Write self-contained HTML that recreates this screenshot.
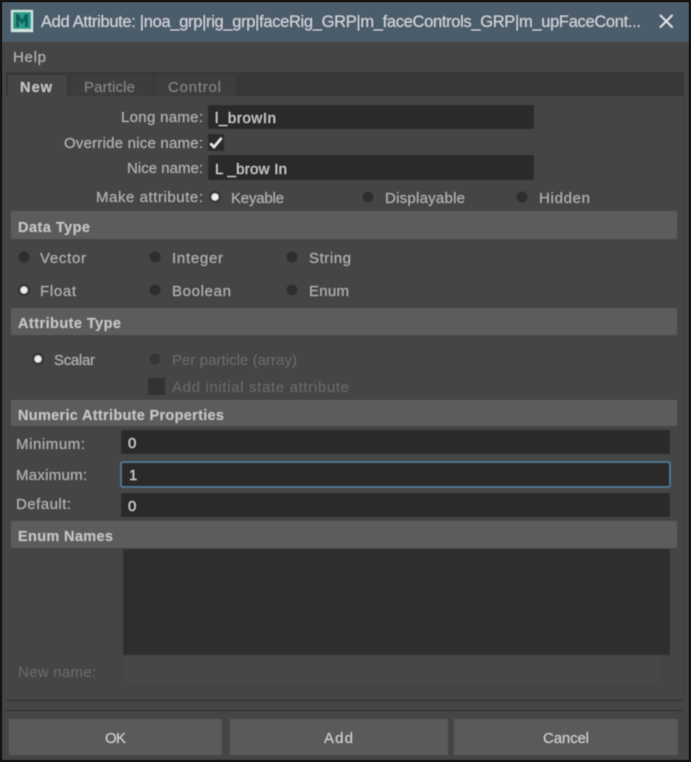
<!DOCTYPE html>
<html><head><meta charset="utf-8"><title>Add Attribute</title>
<style>
html,body{margin:0;padding:0;background:#141414;width:691px;height:762px;overflow:hidden}
svg{display:block}
text{font-family:"Liberation Sans",sans-serif;font-size:15px;fill:#b4b4b4}
.b{font-weight:bold;font-size:14.5px;fill:#c6c6c6}
.d{fill:#6b6b6b}
.v{fill:#d4d4d4}
</style></head><body>
<svg width="691" height="762" viewBox="0 0 691 762" xmlns="http://www.w3.org/2000/svg">
<defs><filter id="f" x="0" y="0" width="100%" height="100%"><feGaussianBlur stdDeviation="0.65"/></filter></defs>
<rect width="691" height="762" fill="#141414"/>
<g filter="url(#f)">
<rect x="2" y="2" width="687" height="758" fill="#444444"/>
<rect x="2" y="2" width="687" height="40" fill="#4c5b6b"/>
<!-- logo -->
<rect x="11" y="10" width="22" height="22" fill="#cfe6e1"/>
<rect x="13" y="12" width="18" height="17" fill="#2a9a8b"/>
<path d="M16 27V14h2.500l3.500 6 3.500-6H28v13h-3v-7l-3 4.500-3-4.500v7z" fill="#11605a"/>
<text x="41" y="27" style="font-size:16.500px;fill:#d2d7dc" textLength="600" lengthAdjust="spacing">Add Attribute: |noa_grp|rig_grp|faceRig_GRP|m_faceControls_GRP|m_upFaceCont...</text>
<path d="M660 15l12.500 12.500M672.500 15L660 27.500" stroke="#e2e6ea" stroke-width="1.800" fill="none"/>
<text x="13" y="62" textLength="33">Help</text>
<!-- tab bar -->
<rect x="6" y="72" width="677" height="24" fill="#373737"/>
<rect x="8" y="75" width="59" height="21" fill="#444444"/>
<rect x="70" y="75" width="82" height="21" fill="#3d3d3d"/>
<rect x="155" y="75" width="81" height="21" fill="#3d3d3d"/>
<text x="20" y="92" class="b" textLength="32">New</text>
<text x="84" y="92" style="fill:#858585" textLength="51">Particle</text>
<text x="168" y="92" style="fill:#858585" textLength="53">Control</text>
<!-- panel -->
<rect x="6" y="96" width="677" height="604" fill="#444444"/>
<path d="M6 700.500H684M6 710.500H684" stroke="#2e2e2e" stroke-width="1"/>
<path d="M683.500 72V700" stroke="#3a3a3a" stroke-width="1"/>
<!-- top form -->
<text x="121" y="122" textLength="82">Long name:</text>
<rect x="208" y="105" width="326" height="24" rx="1" fill="#2b2b2b"/>
<text x="215" y="123" class="v" textLength="61">l_browIn</text>
<text x="64" y="148" textLength="139">Override nice name:</text>
<rect x="208" y="134" width="16" height="17" fill="#2b2b2b"/>
<path d="M210.500 143.500l3.500 3.500 7.500-9" stroke="#f0f0f0" stroke-width="2.200" fill="none"/>
<text x="127" y="173" textLength="76">Nice name:</text>
<rect x="208" y="155" width="326" height="25" rx="1" fill="#2b2b2b"/>
<text x="215" y="174" class="v" textLength="72">L _brow In</text>
<text x="96" y="202" textLength="107">Make attribute:</text>
<circle cx="215" cy="197" r="3.500" fill="#eee"/><circle cx="215" cy="197" r="5.500" fill="none" stroke="#333" stroke-width="1.200"/>
<text x="231" y="203" textLength="53">Keyable</text>
<circle cx="368" cy="197" r="5.500" fill="#2e2e2e"/>
<text x="385" y="203" textLength="80">Displayable</text>
<circle cx="522" cy="197" r="5.500" fill="#2e2e2e"/>
<text x="539" y="203" textLength="51">Hidden</text>
<!-- Data type -->
<rect x="11" y="211" width="666" height="28" rx="1" fill="#5b5b5b"/>
<text x="18" y="232" class="b" textLength="72">Data Type</text>
<circle cx="24" cy="257" r="5.500" fill="#2e2e2e"/>
<text x="40" y="263" textLength="46">Vector</text>
<circle cx="155" cy="257" r="5.500" fill="#2e2e2e"/>
<text x="172" y="263" textLength="51">Integer</text>
<circle cx="292" cy="257" r="5.500" fill="#2e2e2e"/>
<text x="309" y="263" textLength="42">String</text>
<circle cx="24" cy="290" r="5.500" fill="none" stroke="#333" stroke-width="1.200"/><circle cx="24" cy="290" r="3.500" fill="#eee"/>
<text x="40" y="296" textLength="36">Float</text>
<circle cx="155" cy="290" r="5.500" fill="#2e2e2e"/>
<text x="172" y="296" textLength="59">Boolean</text>
<circle cx="292" cy="290" r="5.500" fill="#2e2e2e"/>
<text x="309" y="296" textLength="40">Enum</text>
<!-- Attribute type -->
<rect x="11" y="308" width="666" height="27" rx="1" fill="#5b5b5b"/>
<text x="18" y="328" class="b" textLength="103">Attribute Type</text>
<circle cx="38" cy="359" r="5.500" fill="none" stroke="#333" stroke-width="1.200"/><circle cx="38" cy="359" r="3.500" fill="#eee"/>
<text x="54" y="365" textLength="41">Scalar</text>
<circle cx="155" cy="359" r="5.500" fill="#343434"/>
<text x="172" y="365" class="d" textLength="125">Per particle (array)</text>
<rect x="148" y="378" width="17" height="17" fill="#333"/>
<text x="172" y="392" class="d" textLength="177">Add initial state attribute</text>
<!-- Numeric -->
<rect x="11" y="400" width="666" height="26" rx="1" fill="#5b5b5b"/>
<text x="18" y="420" class="b" textLength="206">Numeric Attribute Properties</text>
<text x="16" y="449" textLength="69">Minimum:</text>
<rect x="121" y="430" width="549" height="24" rx="1" fill="#2b2b2b"/>
<text x="128" y="448" class="v" textLength="8">0</text>
<text x="16" y="480" textLength="71">Maximum:</text>
<rect x="121" y="462" width="549" height="25" rx="2" fill="#2b2b2b" stroke="#53809f" stroke-width="1.500"/>
<text x="129" y="480" class="v">1</text>
<text x="16" y="509" textLength="55">Default:</text>
<rect x="121" y="493" width="549" height="24" rx="1" fill="#2b2b2b"/>
<text x="128" y="511" class="v" textLength="8">0</text>
<!-- Enum -->
<rect x="11" y="521" width="666" height="27" rx="1" fill="#5b5b5b"/>
<text x="18" y="541" class="b" textLength="95">Enum Names</text>
<rect x="123" y="549" width="547" height="106" rx="1" fill="#2d2d2d"/>
<text x="18" y="677" class="d" textLength="78">New name:</text>
<rect x="125" y="657" width="536" height="27" fill="#464646"/>
<!-- Buttons -->
<rect x="9" y="719" width="213" height="36" rx="1" fill="#5a5a5a"/>
<rect x="230" y="719" width="218" height="36" rx="1" fill="#5a5a5a"/>
<rect x="454" y="719" width="224" height="36" rx="1" fill="#5a5a5a"/>
<text x="105" y="743" style="fill:#d2d2d2" textLength="21">OK</text>
<text x="324" y="743" style="fill:#d2d2d2" textLength="29">Add</text>
<text x="543" y="743" style="fill:#d2d2d2" textLength="46">Cancel</text>
</g>
</svg>
</body></html>
